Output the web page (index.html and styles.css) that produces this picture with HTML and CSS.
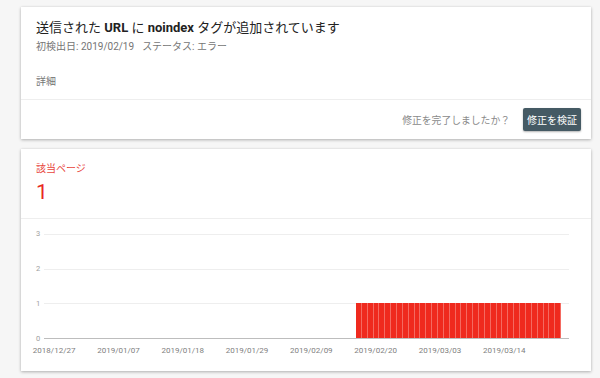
FILE: index.html
```html
<!DOCTYPE html>
<html lang="ja">
<head>
    <meta charset="UTF-8">
    <meta name="viewport" content="width=device-width, initial-scale=1.0">
    <title>カバレッジ - noindex</title>
    <link rel="stylesheet" href="styles.css">
</head>
<body>

    <!-- Issue card -->
    <div class="card issue">
        <div class="issue-head">
            <h1 class="issue-title">送信された <b>URL</b> に <b>noindex</b> タグが追加されています</h1>
            <p class="issue-meta"><span>初検出日: 2019/02/19</span><span>ステータス: エラー</span></p>
            <p class="issue-more">詳細</p>
        </div>
        <div class="issue-foot">
            <span class="issue-question">修正を完了しましたか？</span>
            <button class="btn-validate">修正を検証</button>
        </div>
    </div>

    <!-- Affected pages card -->
    <div class="card pages">
        <div class="pages-summary">
            <div class="pages-label">該当ページ</div>
            <div class="pages-count">1</div>
        </div>
        <div class="chart">
            <div class="y-axis">
                <span>3</span>
                <span>2</span>
                <span>1</span>
                <span>0</span>
            </div>
            <div class="plot">
                <div class="bars">
                    <div class="bar"></div><div class="bar"></div><div class="bar"></div><div class="bar"></div><div class="bar"></div>
                    <div class="bar"></div><div class="bar"></div><div class="bar"></div><div class="bar"></div><div class="bar"></div>
                    <div class="bar"></div><div class="bar"></div><div class="bar"></div><div class="bar"></div><div class="bar"></div>
                    <div class="bar"></div><div class="bar"></div><div class="bar"></div><div class="bar"></div><div class="bar"></div>
                    <div class="bar"></div><div class="bar"></div><div class="bar"></div><div class="bar"></div><div class="bar"></div>
                    <div class="bar"></div><div class="bar"></div><div class="bar"></div><div class="bar"></div><div class="bar"></div>
                    <div class="bar"></div><div class="bar"></div><div class="bar"></div><div class="bar"></div><div class="bar"></div>
                </div>
            </div>
        </div>
        <div class="x-axis">
            <span>2018/12/27</span>
            <span>2019/01/07</span>
            <span>2019/01/18</span>
            <span>2019/01/29</span>
            <span>2019/02/09</span>
            <span>2019/02/20</span>
            <span>2019/03/03</span>
            <span>2019/03/14</span>
        </div>
    </div>

</body>
</html>
```

FILE: styles.css
```css
body {
    font-family: Roboto, "Noto Sans CJK JP", sans-serif;
    margin: 0;
    padding: 7px 0 0 21px;
    background-color: #f6f6f6;
    color: #222;
}

.card {
    width: 570px;
    background-color: white;
    box-shadow: 0 1px 3px rgba(0, 0, 0, 0.28), 0 0 2px rgba(0, 0, 0, 0.06);
    margin-bottom: 10px;
}

/* Issue card */
.issue-head {
    padding: 12px 15px 10px;
    border-bottom: 1px solid #eee;
}

.issue-title {
    margin: 0;
    font-size: 13px;
    line-height: 18px;
    font-weight: 400;
    color: #222;
}

.issue-title b {
    font-weight: 700;
}

.issue-meta {
    margin: 3px 0 0;
    font-size: 10px;
    line-height: 14px;
    color: #757575;
}

.issue-meta span + span {
    margin-left: 8px;
}

.issue-more {
    margin: 21px 0 0;
    font-size: 10px;
    line-height: 14px;
    color: #757575;
}

.issue-foot {
    height: 39px;
    display: flex;
    justify-content: flex-end;
    align-items: center;
    gap: 13px;
    padding-right: 10px;
}

.issue-question {
    font-size: 9.8px;
    color: #8a8a8a;
}

.btn-validate {
    height: 23px;
    padding: 0 4px;
    border: none;
    border-radius: 2px;
    background-color: #455a64;
    color: white;
    font-family: inherit;
    font-size: 10px;
    box-shadow: 0 1px 2px rgba(0, 0, 0, 0.3);
}

/* Affected pages card */
.pages-summary {
    padding: 13px 15px 14px;
    border-bottom: 1px solid #eee;
}

.pages-label {
    font-size: 10px;
    line-height: 14px;
    color: #e8453c;
}

.pages-count {
    margin-top: 4px;
    font-size: 21px;
    line-height: 24px;
    color: #e8291f;
}

.chart {
    display: grid;
    grid-template-columns: 8px 525px;
    padding: 15px 0 0 15px;
}

.y-axis {
    margin: -5px 0;
    height: 115px;
    display: flex;
    flex-direction: column;
    justify-content: space-between;
    font-size: 7.5px;
    line-height: 10px;
    color: #9e9e9e;
}

.plot {
    height: 104px;
    border-bottom: 1px solid #bdbdbd;
    background: repeating-linear-gradient(to bottom, #eeeeee 0 1px, transparent 1px 34.67px);
    display: flex;
    align-items: flex-end;
}

.bars {
    margin-left: 312px;
    width: 205px;
    height: 34.67px;
    display: flex;
}

.bar {
    flex: 1;
    background-color: #ef2a1e;
    box-shadow: inset -1px 0 rgba(255, 255, 255, 0.3);
}

.x-axis {
    display: flex;
    margin: 7px 0 0 1px;
    padding-bottom: 15px;
    font-size: 8px;
    line-height: 10px;
    color: #808080;
}

.x-axis span {
    width: 64.3px;
    text-align: center;
}
```
